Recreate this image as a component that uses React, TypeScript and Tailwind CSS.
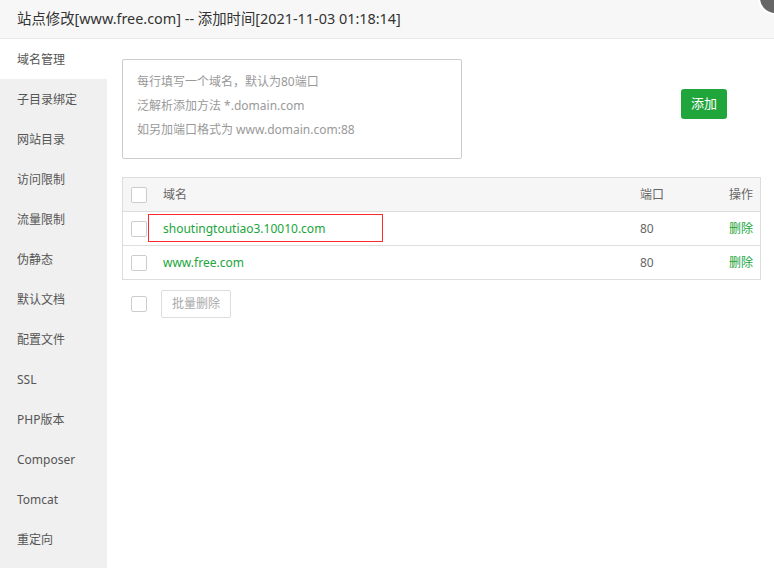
import { useState } from "react";

const menu = [
    "域名管理",
    "子目录绑定",
    "网站目录",
    "访问限制",
    "流量限制",
    "伪静态",
    "默认文档",
    "配置文件",
    "SSL",
    "PHP版本",
    "Composer",
    "Tomcat",
    "重定向",
];

const domains = [
    { name: "shoutingtoutiao3.10010.com", port: 80, marked: true },
    { name: "www.free.com", port: 80, marked: false },
];

const Box = () => <span className="block w-4 h-4 border border-[#cccccc] rounded-[2px] bg-white" />;

const App = () => {
    const [active] = useState(0);

    return (
        <div
            className="relative w-[774px] h-[568px] overflow-hidden bg-white text-[#555] flex flex-col"
            style={{ fontFamily: '"Noto Sans", "Noto Sans CJK SC", sans-serif' }}
        >
            {/* Title bar */}
            <div className="h-[39px] shrink-0 bg-[#f7f7f7] border-b border-[#e8e8e8] flex items-center pl-[17px] text-[14.4px] text-[#333]">
                站点修改[www.free.com] -- 添加时间[2021-11-03 01:18:14]
            </div>
            {/* close button (cut off) */}
            <span className="absolute -top-[19px] -right-[18px] w-[34px] h-[34px] rounded-full bg-[#666] border-2 border-white" />

            <div className="flex flex-1 min-h-0">
                {/* Side menu */}
                <div className="w-[107px] shrink-0 bg-[#f0f0f0]">
                    {menu.map((item, i) => (
                        <div
                            key={item}
                            className={`h-10 flex items-center pl-[17px] pt-[2px] text-[12px] text-[#555] ${
                                i === active ? "bg-white" : ""
                            }`}
                        >
                            {item}
                        </div>
                    ))}
                </div>

                {/* Content */}
                <div className="flex-1 pl-[15px] pr-[13px] pt-[20px] text-[12px]">
                    <div className="flex items-start">
                        <div className="w-[340px] h-[100px] border border-[#cccccc] rounded-[2px] pl-[14px] pt-[10px] text-[#999] leading-[24px]">
                            <p>每行填写一个域名，默认为80端口</p>
                            <p>泛解析添加方法 *.domain.com</p>
                            <p>如另加端口格式为 www.domain.com:88</p>
                        </div>
                        <button className="ml-[219px] mt-[30px] w-[46px] h-[30px] rounded-[3px] bg-[#20a53a] text-white text-[13px]">
                            添加
                        </button>
                    </div>

                    {/* Table */}
                    <div className="mt-[18px] border border-[#dddddd]">
                        <div className="h-[33px] flex items-center bg-[#f6f6f6] text-[#666]">
                            <div className="w-10 pl-[8px]">
                                <Box />
                            </div>
                            <div className="flex-1">域名</div>
                            <div className="w-[80px]">端口</div>
                            <div className="w-[40px] text-right pr-[7px]">操作</div>
                        </div>
                        {domains.map((d) => (
                            <div key={d.name} className="h-[34px] flex items-center border-t border-[#dddddd]">
                                <div className="w-10 pl-[8px]">
                                    <Box />
                                </div>
                                <div className="flex-1">
                                    <span className="relative text-[#20a53a]">
                                        {d.name}
                                        {d.marked && (
                                            <span className="absolute -left-[15px] -top-[6px] w-[235px] h-[28px] border border-[#ff2a2a]" />
                                        )}
                                    </span>
                                </div>
                                <div className="w-[80px] text-[#666]">{d.port}</div>
                                <div className="w-[40px] text-right pr-[7px] text-[#20a53a]">删除</div>
                            </div>
                        ))}
                    </div>

                    <div className="mt-[10px] flex items-center">
                        <div className="w-10 pl-[9px]">
                            <Box />
                        </div>
                        <button className="-ml-[1px] h-[28px] w-[70px] border border-[#dddddd] rounded-[2px] text-[#aaa] bg-white">
                            批量删除
                        </button>
                    </div>
                </div>
            </div>
        </div>
    );
};

export default App;
